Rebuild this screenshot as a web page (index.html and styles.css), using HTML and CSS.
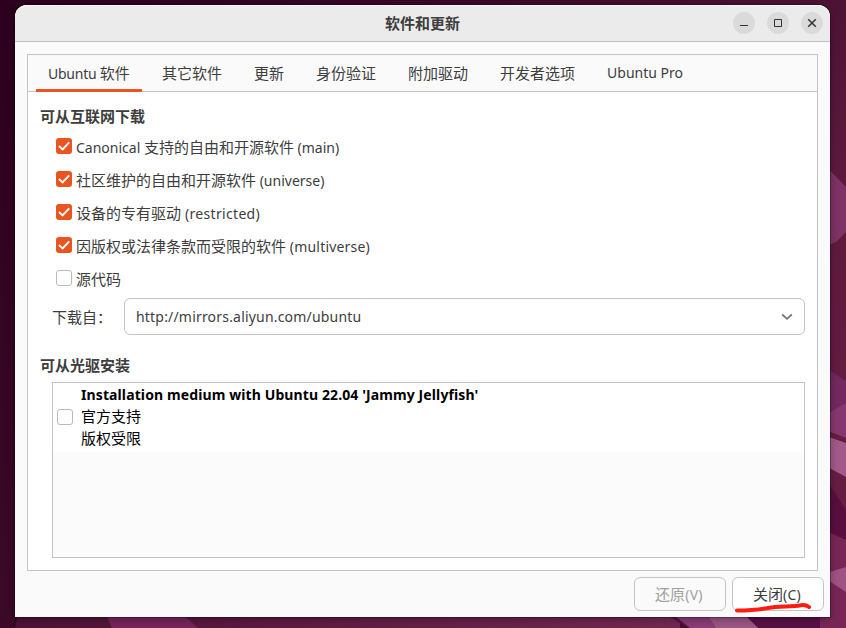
FILE: index.html
```html
<!DOCTYPE html>
<html lang="zh-CN">
<head>
<meta charset="utf-8">
<title>软件和更新</title>
<link rel="stylesheet" href="styles.css">
</head>
<body>
<svg class="wallpaper" viewBox="0 0 846 628" aria-hidden="true">
  <defs>
    <linearGradient id="top" x1="0" x2="1"><stop offset="0" stop-color="#2c001e"/><stop offset=".5" stop-color="#3a0726"/><stop offset="1" stop-color="#4e1435"/></linearGradient>
    <linearGradient id="left" x1="0" y1="0" x2="0" y2="1"><stop offset="0" stop-color="#2c001e"/><stop offset="1" stop-color="#3d0928"/></linearGradient>
    <linearGradient id="right" x1="0" y1="0" x2="0" y2="1"><stop offset="0" stop-color="#4d1334"/><stop offset=".25" stop-color="#5d193d"/><stop offset="1" stop-color="#6b1f45"/></linearGradient>
    <linearGradient id="bottom" x1="0" x2="1"><stop offset="0" stop-color="#4d1235"/><stop offset="1" stop-color="#742850"/></linearGradient>
  </defs>
  <path fill="url(#top)" d="M0 0H846V628H0z"/>
  <path fill="url(#left)" d="M0 0H15V628H0z"/>
  <path fill="url(#right)" d="M820 0H846V628H820z"/>
  <path fill="url(#bottom)" d="M18 612H680V628H15z"/>
  <path fill="#77245a" d="M105 612H180L198 628H112z"/>
  <path fill="#5a0e45" d="M662 612H846V628H688z"/>
  <path fill="#8b3c76" d="M670 612H740L758 628H690z"/>
  <path fill="#9b5584" d="M706 612H742L758 628H716z"/>
  <path fill="#7f3265" d="M820 160L846 187V232L836 242L820 248z"/>
  <path fill="#74285f" d="M820 364L846 381V410L820 420z"/>
  <path fill="#87376f" d="M846 403V438L820 428V418z"/>
  <path fill="#a3598a" d="M820 434L846 443V477L820 463z"/>
  <path fill="#5a0e40" d="M820 470L846 510V550L820 530z"/>
  <path fill="#792657" d="M820 528L846 540V628H820z"/>
  <path fill="#a05284" d="M846 567V592L820 575z"/>
</svg>
<main class="window">
  <header class="titlebar">
    <h1 class="title">软件和更新</h1>
    <div class="controls">
      <button class="control" aria-label="最小化"><svg width="22" height="22"><path d="M7 13.5h8"/></svg></button>
      <button class="control" aria-label="最大化"><svg width="22" height="22"><path d="M7.5 7.5h7v7h-7z"/></svg></button>
      <button class="control" aria-label="关闭"><svg width="22" height="22"><path stroke-width="1.5" d="M7.2 7.2l7.6 7.6M14.8 7.2l-7.6 7.6"/></svg></button>
    </div>
  </header>
  <section class="notebook">
    <nav class="tabs">
      <a class="tab active"><span class="latin tight">Ubuntu</span>&nbsp;软件</a>
      <a class="tab">其它软件</a>
      <a class="tab">更新</a>
      <a class="tab">身份验证</a>
      <a class="tab">附加驱动</a>
      <a class="tab">开发者选项</a>
      <a class="tab pro"><span class="latin">Ubuntu Pro</span></a>
    </nav>
    <div class="page">
      <h2 class="heading">可从互联网下载</h2>
      <div class="options">
        <label class="option"><span class="check on"><svg width="16" height="16"><path d="M3 8l3.6 3.4L13.2 4.4"/></svg></span><span><span class="latin">Canonical </span>支持的自由和开源软件<span class="latin"> (main)</span></span></label>
        <label class="option"><span class="check on"><svg width="16" height="16"><path d="M3 8l3.6 3.4L13.2 4.4"/></svg></span><span>社区维护的自由和开源软件<span class="latin"> (universe)</span></span></label>
        <label class="option"><span class="check on"><svg width="16" height="16"><path d="M3 8l3.6 3.4L13.2 4.4"/></svg></span><span>设备的专有驱动<span class="latin wide"> (restricted)</span></span></label>
        <label class="option"><span class="check on"><svg width="16" height="16"><path d="M3 8l3.6 3.4L13.2 4.4"/></svg></span><span>因版权或法律条款而受限的软件<span class="latin loose"> (multiverse)</span></span></label>
        <label class="option source"><span class="check"></span><span>源代码</span></label>
      </div>
      <div class="server">
        <span class="server-label">下载自：</span>
        <div class="combo"><span class="latin loose">http://mirrors.aliyun.com/ubuntu</span><svg class="arrow" width="12" height="8"><path d="M1.2 1.5L6 5.8L10.8 1.5"/></svg></div>
      </div>
      <h2 class="heading disc">可从光驱安装</h2>
      <div class="list">
        <div class="entry">
          <span class="check"></span>
          <div class="lines">
            <strong class="medium">Installation medium with Ubuntu 22.04 'Jammy Jellyfish'</strong>
            <span>官方支持</span>
            <span>版权受限</span>
          </div>
        </div>
      </div>
    </div>
  </section>
  <footer class="actions">
    <button class="button disabled">还原<span class="latin wide">(V)</span></button>
    <button class="button">关闭<span class="latin wide">(C)</span><svg class="stroke" width="80" height="12"><path d="M3 8.5C17 8.5 24 8 34 6C46 4 57 5 67 3.2C71 2.6 73 3.5 75 5"/></svg></button>
  </footer>
</main>
</body>
</html>
```
FILE: styles.css
```css
* { box-sizing: border-box; }
body {
  margin: 0;
  width: 846px;
  height: 628px;
  padding: 5px 16px 11px 15px;
  overflow: hidden;
  background: #2c001e;
  color: #3d3d3d;
  font: 15px/22px "Noto Sans CJK SC", sans-serif;
}
.wallpaper { position: absolute; inset: 0; width: 846px; height: 628px; }
.window {
  position: relative;
  display: flex;
  flex-direction: column;
  width: 815px;
  height: 612px;
  background: #fafafa;
  border-radius: 12px 12px 0 0;
  box-shadow: 0 0 0 1px rgba(0,0,0,.25), 0 2px 9px rgba(0,0,0,.35);
}
.titlebar {
  display: grid;
  grid-template-columns: 1fr auto 1fr;
  align-items: center;
  flex: none;
  height: 37px;
  padding-right: 7px;
  background: #ebebeb;
  border-bottom: 1px solid #bfbfbf;
  border-radius: 12px 12px 0 0;
  box-shadow: inset 0 1px #f8f8f8;
}
.title { grid-column: 2; margin: 0 0 1px 7px; font-size: 15px; font-weight: 700; line-height: 22px; }
.controls { display: flex; justify-content: flex-end; gap: 12px; }
.control { width: 22px; height: 22px; padding: 0; border: 0; border-radius: 50%; background: #dadada; }
.control svg { display: block; fill: none; stroke: #333; }
.latin { font-family: "Noto Sans", sans-serif; font-size: 14px; }
.tight { letter-spacing: -.25px; }
.loose { letter-spacing: .19px; }
.wide { letter-spacing: .32px; }
.notebook {
  display: flex;
  flex-direction: column;
  flex: none;
  width: 791px;
  height: 517px;
  margin: 12px 0 0 12px;
  border: 1px solid #c4c4c4;
}
.tabs { display: flex; flex: none; height: 37px; padding-left: 8px; border-bottom: 1px solid #c4c4c4; background: #fafafa; }
.tab { height: 37px; padding: 7px 16px; white-space: nowrap; }
.tab.active { width: 106px; margin-right: 4px; padding: 7px 12px; border-bottom: 3px solid #e95420; }
.tab.pro { padding-top: 6px; }
.page { flex: 1; background: #fff; padding: 13px 12px 0; }
.heading { margin: 0; font-size: 15px; font-weight: 700; line-height: 22px; }
.options { padding: 4px 0 0 16px; }
.option { display: flex; align-items: center; gap: 4px; height: 33px; white-space: nowrap; }
.option.source { padding-bottom: 2px; }
.option.source .check { margin-top: -1px; }
.check { flex: none; width: 16px; height: 16px; margin-top: -3px; border: 1px solid #bababa; border-radius: 3px; background: #fff; }
.check.on { border: 0; background: #e95420; }
.check svg { display: block; fill: none; stroke: #fff; stroke-width: 2; }
.server { display: flex; align-items: center; padding-left: 12px; margin-top: 2px; }
.server-label { width: 72px; }
.combo { display: flex; align-items: center; justify-content: space-between; flex: none; width: 681px; height: 37px; padding: 0 11px; border: 1px solid #c4c4c4; border-radius: 6px; }
.arrow { fill: none; stroke: #777; stroke-width: 1.8; }
.heading.disc { margin-top: 19px; }
.list { width: 753px; height: 176px; margin: 6px 0 0 12px; border: 1px solid #c4c4c4; background: #fbfbfb; }
.entry { display: flex; align-items: center; height: 69px; padding-left: 4px; background: #fff; color: #000; }
.entry .check { margin: 0 8px 1px 0; }
.lines { display: flex; flex-direction: column; margin-bottom: 3px; }
.medium { font-family: "Noto Sans", sans-serif; font-size: 14px; letter-spacing: .11px; line-height: 21px; white-space: nowrap; }
.actions { display: flex; justify-content: flex-end; gap: 6px; padding: 6px 6px 0 0; }
.button { position: relative; width: 92px; height: 34px; padding: 0 2px 0 0; border: 1px solid #c4c4c4; border-radius: 6px; background: #fff; color: #3d3d3d; font: inherit; }
.button.disabled { background: #fafafa; color: #a0a0a0; }
.stroke { position: absolute; left: 1px; top: 24px; fill: none; stroke: #ff1d12; stroke-width: 4; stroke-linecap: round; }
```
